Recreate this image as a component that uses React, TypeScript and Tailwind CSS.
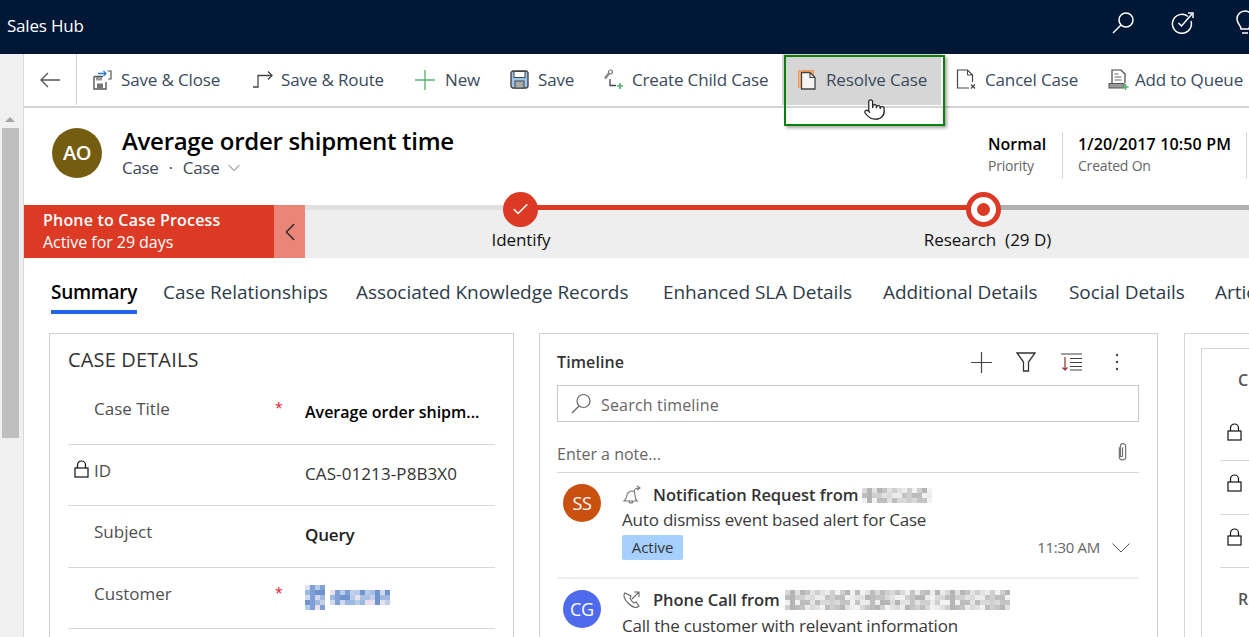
import { Check, ChevronDown, ChevronLeft, Pointer } from 'lucide-react';

const blurTints = ['#d9d9d9', '#c4c4c4', '#ececec', '#b5b5b5', '#e2e2e2', '#cfcfcf', '#f2f2f2', '#bdbdbd'];
const blueTints = ['#e6e0ef', '#c3cfe8', '#a9c0e4', '#7f9fd6', '#b6cde9', '#6f93cf', '#d0d9ee', '#9db8e0'];

function Pixels({ cols, rows, size, tints }: { cols: number; rows: number; size: number; tints: string[] }) {
  const cells = [];
  for (let y = 0; y < rows; y++) {
    for (let x = 0; x < cols; x++) {
      const pick = (x * x * 3 + y * 7 + x * y + (x >> 2)) % tints.length;
      cells.push(<rect key={`${x}-${y}`} x={x * size} y={y * size} width={size} height={size} fill={tints[pick]} />);
    }
  }
  return (
    <svg width={cols * size} height={rows * size} className="block shrink-0">
      {cells}
    </svg>
  );
}

function Lock({ className }: { className?: string }) {
  return (
    <svg width="15" height="18" viewBox="0 0 15 18" className={className} fill="none" stroke="#111" strokeWidth="1.2">
      <rect x="1" y="8" width="13" height="9" fill="#fff" />
      <path d="M3.5 8V5a4 4 0 0 1 8 0v3" />
    </svg>
  );
}

function SaveCloseIcon() {
  return (
    <svg width="20" height="20" viewBox="0 0 20 20" fill="none">
      <path d="M2 6.5h9M2 6.5v12.5h12v-7" stroke="#555" strokeWidth="1.4" />
      <rect x="5" y="13.5" width="6" height="5" fill="#777" />
      <rect x="4" y="7" width="6" height="3.5" fill="#999" />
      <path d="M6 3.5h8M11.5 1l2.5 2.5L11.5 6" stroke="#2b7cd3" strokeWidth="1.3" />
      <path d="M15.5 1H19v8h-3" stroke="#555" strokeWidth="1.2" />
    </svg>
  );
}

function RouteIcon() {
  return (
    <svg width="21" height="20" viewBox="0 0 21 20" fill="none" stroke="#444" strokeWidth="1.3">
      <path d="M1 17h5V5.5h14" />
      <path d="M16 1.5l4 4-4 4" />
    </svg>
  );
}

function NewIcon() {
  return (
    <svg width="20" height="20" viewBox="0 0 20 20" fill="none" stroke="#4fb56b" strokeWidth="1.3">
      <path d="M10 0v20M0 10h20" />
    </svg>
  );
}

function SaveIcon() {
  return (
    <svg width="19" height="19" viewBox="0 0 19 19">
      <path d="M1 2.5 2.5 1h14L18 2.500v14L16.500 18h-14L1 16.500z" fill="#9dc6ec" stroke="#444" strokeWidth="1.4" />
      <rect x="4" y="1.500" width="11" height="6" fill="#fff" stroke="#444" />
      <rect x="5" y="11" width="9" height="7" fill="#aaa" stroke="#444" />
    </svg>
  );
}

function ChildCaseIcon() {
  return (
    <svg width="21" height="21" viewBox="0 0 21 21" fill="none">
      <path d="M2 9.500 7 3" stroke="#888" strokeWidth="2.6" />
      <circle cx="7.500" cy="3" r="2" stroke="#777" strokeWidth="1.2" fill="#fff" />
      <path d="M7 10v6.500h6" stroke="#444" strokeWidth="1.3" />
      <path d="M17 14v6M14 17h6" stroke="#4fb56b" strokeWidth="1.6" />
    </svg>
  );
}

function ResolveIcon() {
  return (
    <svg width="20" height="20" viewBox="0 0 20 20" fill="none">
      <rect x="0.500" y="0.500" width="15" height="17" fill="#f5b27c" stroke="#ef9a55" />
      <path d="M3.500 2.500h8.500l5 5v11.500H3.500z" fill="#f4f4f4" stroke="#444" strokeWidth="1.300" />
      <path d="M12 2.500v5h5" stroke="#444" strokeWidth="1.100" />
    </svg>
  );
}

function CancelIcon() {
  return (
    <svg width="21" height="21" viewBox="0 0 21 21" fill="none">
      <path d="M13 19H1.500V1h10l5 5v7" stroke="#444" strokeWidth="1.200" />
      <path d="M11.500 1v5h5" stroke="#444" />
      <path d="M15 15.500l4 4M19 15.500l-4 4" stroke="#444" strokeWidth="1.200" />
    </svg>
  );
}

function QueueIcon() {
  return (
    <svg width="21" height="21" viewBox="0 0 21 21" fill="none">
      <path d="M4 14V1h9l4 4v9" stroke="#444" strokeWidth="1.200" />
      <path d="M6.500 5h4M6.500 8h7M6.500 11h7" stroke="#666" />
      <rect x="1" y="14.500" width="15" height="4.500" fill="#999" stroke="#555" />
      <path d="M17.500 15v6M14.500 18h6" stroke="#4fb56b" strokeWidth="1.600" />
    </svg>
  );
}

const commands = [
  { label: 'Save & Close', icon: <SaveCloseIcon />, cell: 'w-[175px] pl-[15px] gap-[9px]' },
  { label: 'Save & Route', icon: <RouteIcon />, cell: 'w-[163px] gap-[8px]' },
  { label: 'New', icon: <NewIcon />, cell: 'w-[95px] gap-[10px]' },
  { label: 'Save', icon: <SaveIcon />, cell: 'w-[93px] gap-[9px]' },
  { label: 'Create Child Case', icon: <ChildCaseIcon />, cell: 'w-[179px] gap-[8px]' },
  { label: 'Resolve Case', icon: <ResolveIcon />, cell: 'w-[159px] bg-[#d6d6d6] pl-[16px] gap-[8px]' },
  { label: 'Cancel Case', icon: <CancelIcon />, cell: 'w-[167px] pl-[15px] gap-[8px]' },
  { label: 'Add to Queue', icon: <QueueIcon />, cell: 'w-[150px] gap-[6px]' },
];

const tabs = [
  { label: 'Summary', cell: 'w-[112px]', active: true },
  { label: 'Case Relationships', cell: 'w-[193px]' },
  { label: 'Associated Knowledge Records', cell: 'w-[307px]' },
  { label: 'Enhanced SLA Details', cell: 'w-[220px]' },
  { label: 'Additional Details', cell: 'w-[186px]' },
  { label: 'Social Details', cell: 'w-[146px]' },
  { label: 'Articles', cell: 'w-[80px]' },
];

function DetailRow({ label, required, locked, children, rowClass }: { label: string; required?: boolean; locked?: boolean; children: React.ReactNode; rowClass: string }) {
  return (
    <div className={`flex border-b border-[#d8d8d8] ${rowClass}`}>
      <div className="w-[26px] pl-[6px] pt-[15px]">{locked && <Lock />}</div>
      <div className="w-[181px] pt-[14px] text-[17px] leading-[24px] text-[#505050]">{label}</div>
      <div className="w-[30px] pt-[15px] text-[14px] leading-[20px] text-[#e8112d]">{required && '*'}</div>
      <div className="flex-1 pt-[17px] text-[16px] leading-[24px] text-[#1a1a1a]">{children}</div>
    </div>
  );
}

export default function App() {
  return (
    <div className="flex h-[637px] w-[1249px] flex-col overflow-hidden bg-white font-['Open_Sans','Noto_Sans',sans-serif]">
      <header className="flex h-[54px] shrink-0 items-center bg-[#001736] pb-[2px] pl-[7px] text-white">
        <span className="text-[17px] tracking-[-0.2px]">Sales Hub</span>
        <div className="ml-auto flex items-center">
          <svg width="24" height="24" viewBox="0 0 24 24" fill="none" stroke="#fff" strokeWidth="1.500" className="-mt-[6px]">
            <circle cx="15" cy="9" r="7" />
            <path d="M10 14 2 22" />
          </svg>
          <svg width="24" height="24" viewBox="0 0 24 24" fill="none" stroke="#fff" strokeWidth="1.500" className="-mt-[6px] ml-[36px]">
            <path d="M17 5.500A9.500 9.500 0 1 0 20 10" />
            <path d="M7.500 12l3 3L21 3" />
            <path d="M17 2h5v5" />
          </svg>
          <svg width="20" height="26" viewBox="0 0 20 26" fill="none" stroke="#fff" strokeWidth="1.500" className="-mr-[6px] -mt-[6px] ml-[40px]">
            <path d="M6 19c0-4-4-5-4-10a8 8 0 0 1 16 0c0 5-4 6-4 10z" />
            <path d="M7 23h6" />
          </svg>
        </div>
      </header>

      <div className="flex min-h-0 flex-1">
        <aside className="flex w-[24px] shrink-0 flex-col items-center border-r border-[#d8d8d8] bg-[#f0f0f0] pr-[3px]">
          <div className="h-[57px]" />
          <div className="flex h-[17px] w-[17px] items-center justify-center">
            <div className="h-0 w-0 border-x-[5px] border-b-[5px] border-x-transparent border-b-[#a6a6a6]" />
          </div>
          <div className="h-[310px] w-[17px] bg-[#bfbfbf]" />
        </aside>

        <main className="relative min-w-0 flex-1">
          <div className="flex h-[54px] items-stretch border-b-2 border-[#d4d4d4] pb-[1px] text-[17px] text-[#3a4a5c] tracking-[-0.15px]">
            <div className="flex w-[53px] shrink-0 items-center justify-center border-r border-[#d0d0d0]">
              <svg width="20" height="16" viewBox="0 0 20 16" fill="none" stroke="#555" strokeWidth="1.300">
                <path d="M20 8H1M8 1 1 8l7 7" />
              </svg>
            </div>
            {commands.map((item) => (
              <div key={item.label} className={`flex shrink-0 items-center whitespace-nowrap ${item.cell}`}>
                {item.icon}
                <span>{item.label}</span>
              </div>
            ))}
          </div>

          <div className="absolute left-[760px] top-[1px] h-[71px] w-[161px] border-2 border-[#0b7f0b] shadow-[2px_2px_3px_rgba(0,0,0,0.35)]" />
          <Pointer size={23} strokeWidth={1.300} fill="#fff" color="#222" className="absolute left-[839px] top-[44px]" />

          <section className="flex h-[97px] pl-[28px]">
            <div className="mt-[20px] flex h-[50px] w-[50px] shrink-0 items-center justify-center rounded-full bg-[#745d10] text-[20px] font-semibold text-white tracking-[-0.4px]">AO</div>
            <div className="ml-[20px] flex-1 pt-[16px]">
              <h1 className="text-[24px] font-semibold leading-[33px] text-black tracking-[-0.29px]">Average order shipment time</h1>
              <div className="flex items-center text-[17px] leading-[22px] text-[#3f4a57] tracking-[-0.3px]">
                <span>Case</span>
                <span className="mx-[10px]">·</span>
                <span>Case</span>
                <ChevronDown size={20} strokeWidth={1} className="ml-[5px]" />
              </div>
            </div>
            <div className="mr-[2px] mt-[24px] flex h-[47px] shrink-0">
              <div className="w-[74px] leading-none">
                <div className="text-[16px] font-semibold leading-[24px] text-black">Normal</div>
                <div className="text-[14px] leading-[20px] text-[#666] tracking-[-0.2px]">Priority</div>
              </div>
              <div className="w-[185px] border-x border-[#d8d8d8] pl-[15px]">
                <div className="text-[16px] font-semibold leading-[24px] text-black tracking-[0.15px]">1/20/2017 10:50 PM</div>
                <div className="text-[14px] leading-[20px] text-[#666] tracking-[-0.2px]">Created On</div>
              </div>
            </div>
          </section>

          <section className="flex h-[53px]">
            <div className="flex w-[250px] shrink-0 flex-col justify-center bg-[#dc3a24] pb-[2px] pl-[19px] text-white">
              <div className="text-[16px] font-semibold leading-[22px] tracking-[0.2px]">Phone to Case Process</div>
              <div className="text-[16px] leading-[22px] tracking-[-0.05px]">Active for 29 days</div>
            </div>
            <div className="flex w-[31px] shrink-0 items-center justify-center bg-[#ea8577]">
              <ChevronLeft size={30} strokeWidth={1} color="#222" />
            </div>
            <div className="relative flex-1 bg-[#eeeeee]">
              <div className="flex h-[5px]">
                <div className="w-[216px] bg-[#e0e0e0]" />
                <div className="w-[463px] bg-[#dc3a24]" />
                <div className="flex-1 bg-[#b0b0b0]" />
              </div>
              <div className="flex pt-[19px] text-[17px] leading-[22px] text-[#111]">
                <div className="w-[432px] text-center tracking-[-0.1px]">Identify</div>
                <div className="w-[494px] whitespace-pre pl-[7px] text-center font-medium">Research  (29 D)</div>
              </div>
              <div className="absolute left-[198px] top-[-13px] flex h-[35px] w-[35px] items-center justify-center rounded-full bg-[#dc3a24]">
                <Check size={19} strokeWidth={2} color="#fff" />
              </div>
              <div className="absolute left-[661px] top-[-13px] flex h-[35px] w-[35px] items-center justify-center rounded-full border-[5px] border-[#dc3a24] bg-white">
                <div className="h-[13px] w-[13px] rounded-full bg-[#dc3a24]" />
              </div>
            </div>
          </section>

          <nav className="flex h-[56px] overflow-hidden pl-[27px] pt-[21px] text-[19px] text-[#2e3b49] tracking-[-0.05px]">
            {tabs.map((tab) => (
              <div key={tab.label} className={`shrink-0 whitespace-nowrap leading-[26px] ${tab.cell}`}>
                <span className={`inline-block ${tab.active ? 'border-b-[4px] border-[#2266e3] pb-[5px] font-semibold text-black tracking-[-0.3px]' : ''}`}>{tab.label}</span>
              </div>
            ))}
          </nav>

          <div className="mt-[19px] flex items-start pl-[25px]">
            <div className="h-[400px] w-[465px] shrink-0 border border-[#cfcfcf] px-[18px]">
              <h2 className="pt-[12px] text-[20px] leading-[28px] text-[#333] tracking-[0.15px]">CASE DETAILS</h2>
              <DetailRow label="Case Title" required rowClass="h-[71px] pt-[9px]">
                <span className="font-semibold text-black">Average order shipm...</span>
              </DetailRow>
              <DetailRow label="ID" locked rowClass="h-[61px]">
                <span className="text-[17px] font-medium text-[#333] tracking-[0.1px]">CAS-01213-P8B3X0</span>
              </DetailRow>
              <DetailRow label="Subject" rowClass="h-[62px]">
                <span className="text-[17px] font-semibold text-[#222] tracking-[-0.2px]">Query</span>
              </DetailRow>
              <DetailRow label="Customer" required rowClass="h-[61px]">
                <div className="flex items-center gap-[5px]">
                  <Pixels cols={4} rows={5} size={5} tints={blueTints} />
                  <Pixels cols={12} rows={3} size={5} tints={blueTints} />
                </div>
              </DetailRow>
            </div>

            <div className="ml-[25px] h-[400px] w-[619px] shrink-0 border border-[#cfcfcf] pl-[17px] pr-[18px]">
              <div className="flex h-[51px] items-center pt-[5px]">
                <span className="text-[16px] font-semibold text-[#333] tracking-[0.1px]">Timeline</span>
                <div className="ml-auto mr-[20px] flex items-center">
                  <svg width="21" height="21" viewBox="0 0 21 21" fill="none" stroke="#444" strokeWidth="1.200">
                    <path d="M10.500 0v21M0 10.500h21" />
                  </svg>
                  <svg width="20" height="20" viewBox="0 0 20 20" fill="none" stroke="#333" strokeWidth="1.300" className="ml-[24px]">
                    <path d="M1 1h18l-6.500 9v9h-5v-9z" />
                  </svg>
                  <svg width="21" height="18" viewBox="0 0 21 18" fill="none" stroke="#444" strokeWidth="1.200" className="ml-[25px]">
                    <path d="M0 1h21M9 5.500h12M9 9.500h12M9 13.500h12M9 17h12" />
                    <path d="M4 4v13M1.500 14.500 4 17l2.500-2.500" stroke="#8a3030" />
                  </svg>
                  <svg width="4" height="18" viewBox="0 0 4 18" fill="#444" className="ml-[33px]">
                    <circle cx="2" cy="2" r="1.200" />
                    <circle cx="2" cy="9" r="1.200" />
                    <circle cx="2" cy="16" r="1.200" />
                  </svg>
                </div>
              </div>
              <div className="flex h-[37px] items-center border border-[#c8c8c8] pl-[12px] text-[16px] text-[#666] tracking-[0.18px]">
                <svg width="22" height="22" viewBox="0 0 22 22" fill="none" stroke="#666" strokeWidth="1.200">
                  <circle cx="13.500" cy="8" r="6.500" />
                  <path d="M9 13 2 20" />
                </svg>
                <span className="ml-[9px] pt-[3px]">Search timeline</span>
              </div>
              <div className="flex h-[51px] items-center border-b border-[#d8d8d8] pt-[13px] text-[16px] text-[#666]">
                <span>Enter a note...</span>
                <svg width="13" height="20" viewBox="0 0 12 19" fill="none" stroke="#777" strokeWidth="1.200" className="ml-auto mr-[10px] -mt-[4px]">
                  <path d="M3 5v9a3 3 0 0 0 6 0V4a2.500 2.500 0 0 0-5 0v9a1 1 0 0 0 2 0V5" />
                </svg>
              </div>

              <div className="flex h-[106px] border-b-2 border-[#eeeeee] pl-[6px] pt-[11px]">
                <div className="flex h-[38px] w-[38px] shrink-0 items-center justify-center rounded-full bg-[#ca5010] text-[18px] text-white tracking-[-0.3px]">SS</div>
                <div className="ml-[21px] flex-1">
                  <div className="-mt-[1px] flex h-[24px] items-center text-[16.500px] font-semibold text-[#333]">
                    <svg width="20" height="20" viewBox="0 0 20 20" fill="none" stroke="#777" strokeWidth="1.100" className="mr-[11px] shrink-0">
                      <path d="M2 16h13c-2-2-2-4-2-6 0-2-1-4-3-4S5 8 5 10c0 2-1 4-3 6zM7 16a2 2 0 0 0 4 0" />
                      <path d="M12 7c0-3 2-4 5-4M15 1l3 2-3 2" />
                    </svg>
                    <span className="tracking-[-0.04px]">Notification Request from</span>
                    <div className="ml-[4px]">
                      <Pixels cols={14} rows={3} size={5} tints={blurTints} />
                    </div>
                  </div>
                  <div className="mt-[1px] text-[17px] leading-[24px] text-[#3a3a3a] tracking-[-0.2px]">Auto dismiss event based alert for Case</div>
                  <div className="mt-[3px] flex h-[25px] items-center">
                    <span className="flex h-[25px] w-[61px] items-center justify-center rounded-[2px] bg-[#a6d0ff] text-[15px] text-[#333]">Active</span>
                    <span className="ml-auto text-[15px] text-[#666] tracking-[-0.3px]">11:30 AM</span>
                    <svg width="18" height="10" viewBox="0 0 18 10" fill="none" stroke="#555" strokeWidth="1" className="ml-[12px] mr-[9px]">
                      <path d="M0.500 0.500 9 9l8.500-8.500" />
                    </svg>
                  </div>
                </div>
              </div>

              <div className="flex pl-[6px] pt-[11px]">
                <div className="flex h-[38px] w-[38px] shrink-0 items-center justify-center rounded-full bg-[#4f6bed] text-[18px] text-white tracking-[-0.3px]">CG</div>
                <div className="ml-[21px] flex-1">
                  <div className="-mt-[2px] flex h-[24px] items-center text-[16.500px] font-semibold text-[#333]">
                    <svg width="20" height="20" viewBox="0 0 20 20" fill="none" stroke="#666" strokeWidth="1.100" className="mr-[11px] shrink-0">
                      <path d="M3 3c-2 2-1 6 3 10s8 6 11 3l-3-4-2 1c-2-1-3-3-4-5l1-2z" />
                      <path d="M10 9l7-7M12 2h5v5" />
                    </svg>
                    <span className="tracking-[-0.04px]">Phone Call from</span>
                    <div className="ml-[5px]">
                      <Pixels cols={45} rows={4} size={5} tints={blurTints} />
                    </div>
                  </div>
                  <div className="mt-[2px] text-[17px] leading-[24px] text-[#3a3a3a] tracking-[-0.2px]">Call the customer with relevant information</div>
                </div>
              </div>
            </div>

            <div className="ml-[26px] h-[400px] w-[200px] shrink-0 border border-[#d4d4d4] pl-[16px] pt-[14px]">
              <div className="h-[400px] border border-[#d4d4d4] pl-[18px]">
                <div className="h-[63px] pl-[18px] pt-[19px] text-[16px] font-semibold text-[#555]">C</div>
                <div className="flex h-[49px] border-b border-[#d8d8d8] pl-[7px] pt-[11px]"><Lock /></div>
                <div className="flex h-[54px] gap-[8px] border-b border-[#d8d8d8] pl-[7px] pt-[13px]"><Lock /><div className="mt-[3px] h-[14px] w-[2px] bg-[#c87f4f]" /></div>
                <div className="flex h-[53px] gap-[8px] border-b border-[#d8d8d8] pl-[7px] pt-[13px]"><Lock /><div className="mt-[3px] h-[14px] w-[2px] bg-[#c87f4f]" /></div>
                <div className="pl-[18px] pt-[19px] text-[16px] font-semibold text-[#555]">R</div>
              </div>
            </div>
          </div>
        </main>
      </div>
    </div>
  );
}
